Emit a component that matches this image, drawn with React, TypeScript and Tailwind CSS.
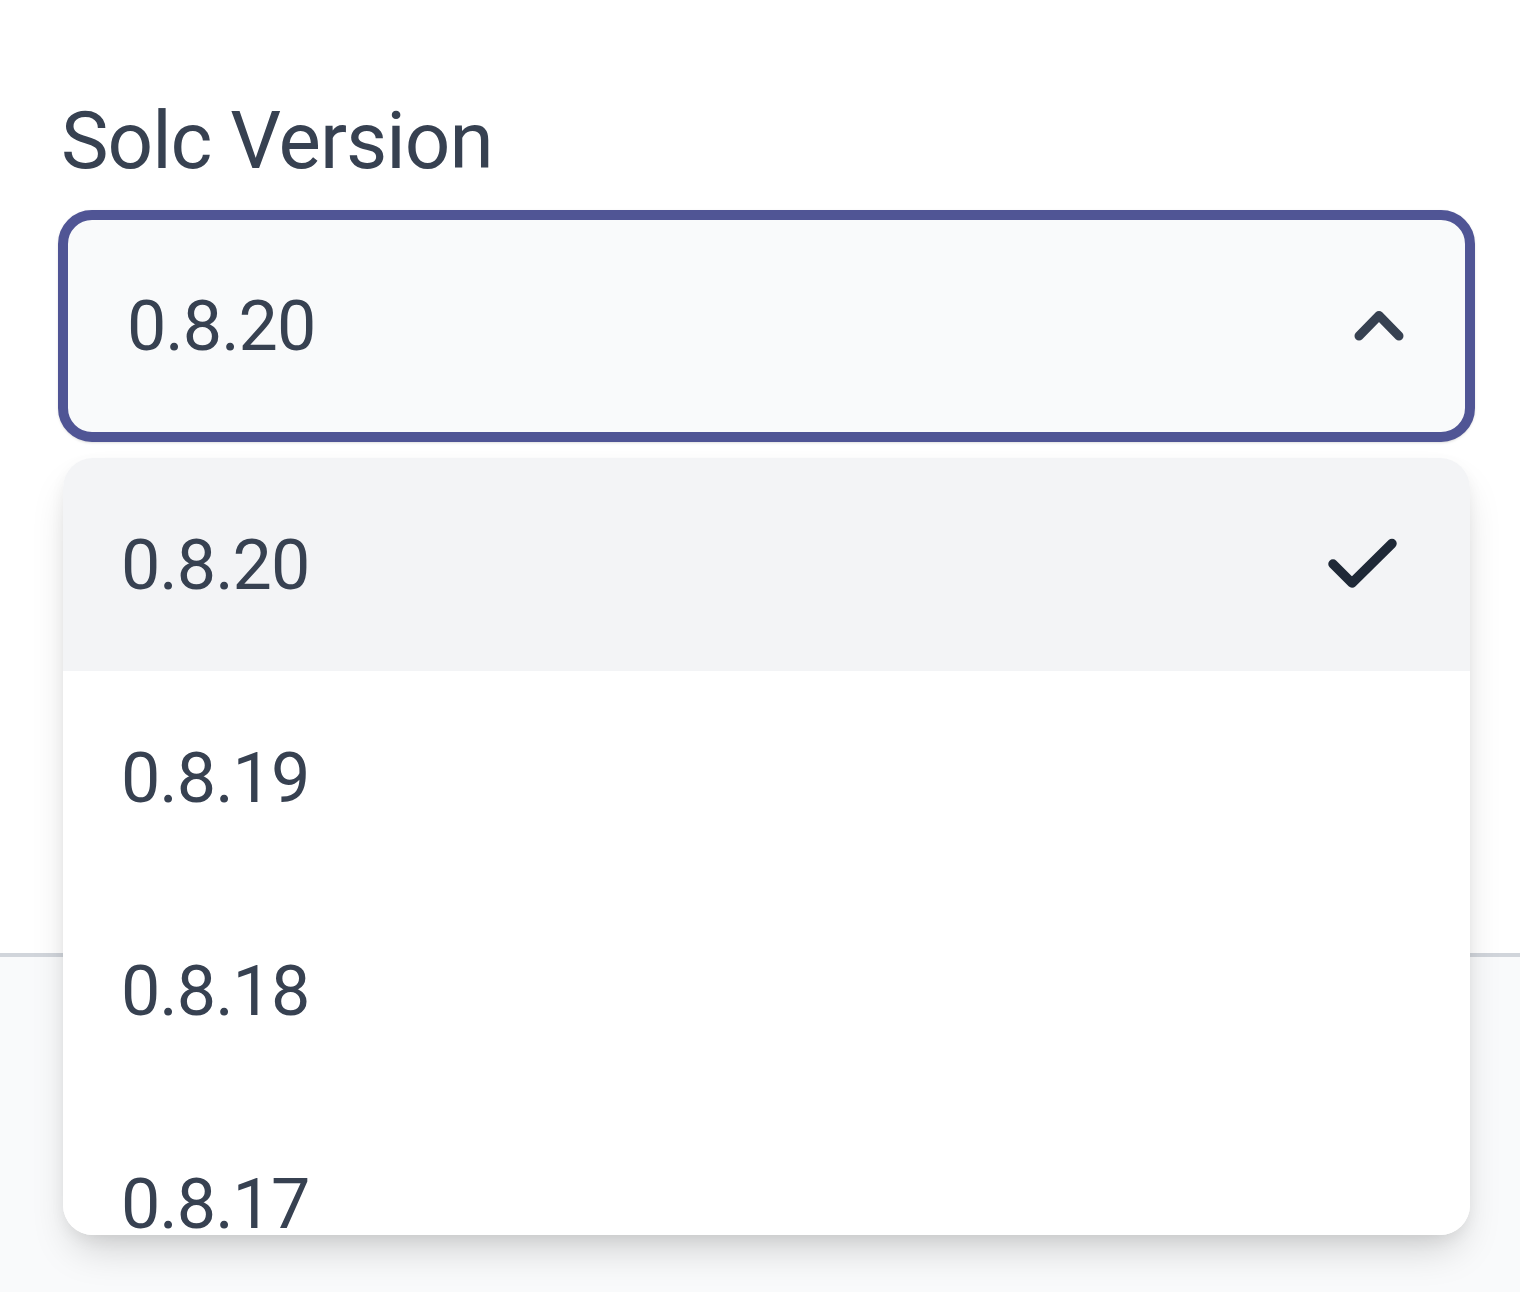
import React from "react";

const VERSIONS = ["0.8.20", "0.8.19", "0.8.18", "0.8.17"];

const ChevronUp = () => (
  <svg width="60" height="40" viewBox="0 0 60 40" fill="none" className="shrink-0">
    <polyline
      points="10,30 30,9.5 50,30"
      stroke="#374151"
      strokeWidth={9}
      strokeLinecap="round"
      strokeLinejoin="round"
    />
  </svg>
);

const Check = () => (
  <svg width="80" height="60" viewBox="0 0 80 60" fill="none" className="shrink-0">
    <polyline
      points="10,29 29,48 69,8.5"
      stroke="#1f2937"
      strokeWidth={9.5}
      strokeLinecap="round"
      strokeLinejoin="round"
    />
  </svg>
);

export default function App() {
  const selected = "0.8.20";

  return (
    <div className="min-h-[1292px] flex flex-col font-['Roboto',sans-serif] text-[#374151]">
      {/* form section */}
      <div className="bg-white pl-[58px] pr-[45px] pt-[91px] h-[953px]">
        <label className="block pl-[3px] text-[80px] leading-[100px] tracking-[-1px]">Solc Version</label>
        <div className="relative mt-[19px]">
          <button className="w-full h-[232px] flex items-center justify-between rounded-[34px] border-[10px] border-[#505595] bg-[#f9fafb] pl-[59px] pr-[56px] shadow-sm">
            <span className="text-[70px] leading-none tracking-[-1px]">0.8.20</span>
            <ChevronUp />
          </button>

          {/* options popover */}
          <div className="absolute left-[5px] right-[5px] top-[248px] h-[777px] overflow-hidden rounded-[30px] bg-white shadow-[0_22px_40px_-10px_rgba(0,0,0,0.18),0_6px_18px_-4px_rgba(0,0,0,0.08)] z-10">
            {VERSIONS.map((v) => (
              <div
                key={v}
                className={
                  "h-[213px] flex items-center justify-between pl-[58px] pr-[67px] " +
                  (v === selected ? "bg-[#f3f4f6]" : "bg-white")
                }
              >
                <span className="text-[70px] leading-none tracking-[-1px]">{v}</span>
                {v === selected && <Check />}
              </div>
            ))}
          </div>
        </div>
      </div>
      {/* footer strip */}
      <div className="flex-1 border-t-4 border-[#d1d5db] bg-[#f9fafb]" />
    </div>
  );
}
